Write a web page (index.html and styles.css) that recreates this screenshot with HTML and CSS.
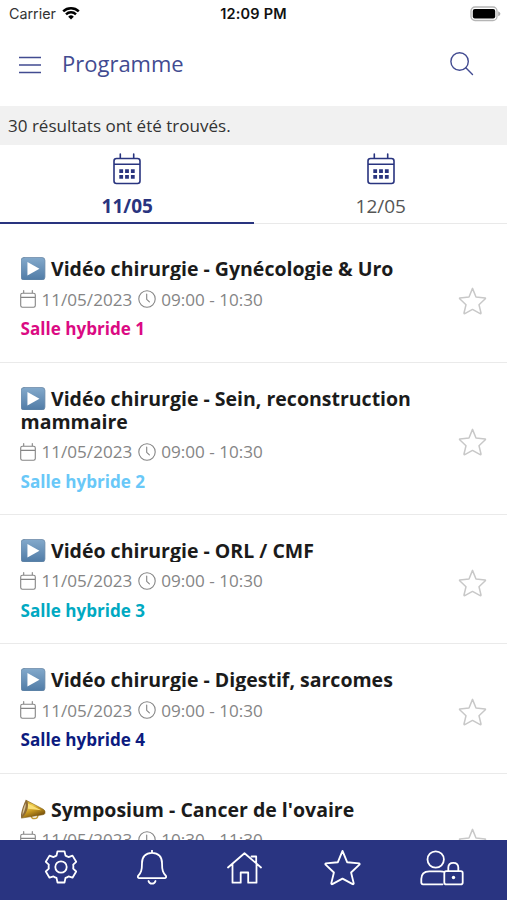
FILE: index.html
```html
<!DOCTYPE html>
<html lang="fr">
<head>
<meta charset="utf-8">
<title>Programme</title>
<link rel="stylesheet" href="styles.css">
</head>
<body>
<svg class="defs" aria-hidden="true">
  <defs>
    <linearGradient id="blue" x1="0" y1="0" x2="0" y2="1"><stop offset="0" stop-color="#83a9cb"/><stop offset="1" stop-color="#507ba6"/></linearGradient>
    <linearGradient id="gold" x1="0" y1="0" x2="0.5" y2="1"><stop offset="0" stop-color="#b98a1c"/><stop offset=".4" stop-color="#f0cd4c"/><stop offset=".65" stop-color="#c7981f"/><stop offset="1" stop-color="#79520c"/></linearGradient>
    <symbol id="play" viewBox="0 0 26 24"><rect x=".8" y=".5" width="24.4" height="23" rx="3" fill="url(#blue)" stroke="#6d8ba8" stroke-width=".8"/><path d="M7.3 5.2v13.6L19.6 12z" fill="#fff"/></symbol>
    <symbol id="star" viewBox="0 0 28 28"><path d="M14 1.4 17.5 10l9.1.9q.7.2.2.9l-6.3 6 2 8.2q0 .8-.8.6L14 22.4l-7.7 4.2q-.8.2-.8-.6l2-8.2-6.3-6q-.5-.7.2-.9l9.1-.9z"/></symbol>
    <symbol id="date" viewBox="0 0 16 18"><path d="M2.4 3.2h11.2q1.7 0 1.7 1.7v10.6q0 1.7-1.7 1.7H2.4q-1.7 0-1.7-1.7V4.900q0-1.700 1.700-1.700zM.7 7.400h14.600M3.700 .6v2.600M12.300 .6v2.600"/></symbol>
    <symbol id="clock" viewBox="0 0 18 18"><circle cx="9" cy="9" r="8.200"/><path d="M8.700 4v5.300l2.700 2.600"/></symbol>
    <symbol id="calendar" viewBox="0 0 28 32"><path d="M3.500 5.500h21q2.500 0 2.500 2.500v20q0 2.500-2.500 2.500h-21Q1 30.500 1 28V8q0-2.500 2.500-2.500zM1 11.200h26M7.300 1v4.500M20.700 1v4.500"/><path class="dots" d="M6.300 16.200h3.800v3.800h-3.800zM12.100 16.200h3.800v3.800h-3.800zM17.900 16.200h3.800v3.800h-3.800zM6.300 22h3.800v3.800h-3.800zM12.100 22h3.800v3.800h-3.800zM17.900 22h3.800v3.800h-3.800z"/></symbol>
  </defs>
</svg>

<div class="screen">
  <div class="status">
    <div class="carrier"><span>Carrier</span>
      <svg class="wifi" viewBox="0 0 18 14"><path d="M1.200 5.300a11.300 11.300 0 0 1 15.600 0M4 8.300a7.300 7.300 0 0 1 10 0"/><path class="wifi-dot" d="M6.200 10.700a4 4 0 0 1 5.600 0L9 13.500z"/></svg>
    </div>
    <div class="time">12:09 PM</div>
    <svg class="battery" viewBox="0 0 31 16"><rect x="1" y="1" width="26" height="13.500" rx="4" fill="#fff" stroke="#b5b5b5" stroke-width="1.300"/><rect x="2.800" y="3" width="22.400" height="9.600" rx="2" fill="#000"/><path d="M28.200 5.300q2.200 1 2.200 2.500t-2.200 2.500z" fill="#aaa"/></svg>
  </div>

  <header class="header">
    <svg class="menu" viewBox="0 0 22 18"><path d="M0 1.500h22M0 9h22M0 16.500h22"/></svg>
    <h1>Programme</h1>
    <svg class="search" viewBox="0 0 24 24"><circle cx="9.600" cy="9.500" r="8.700"/><path d="m15.800 15.800 6.700 6.700"/></svg>
  </header>

  <div class="results">30 résultats ont été trouvés.</div>

  <nav class="tabs">
    <div class="tab active"><svg><use href="#calendar"/></svg><span>11/05</span></div>
    <div class="tab"><svg><use href="#calendar"/></svg><span>12/05</span></div>
  </nav>

  <main class="list">
    <article class="item">
      <div class="info">
        <h2><svg><use href="#play"/></svg>Vidéo chirurgie - Gynécologie &amp; Uro</h2>
        <div class="meta"><svg class="date"><use href="#date"/></svg><span class="day">11/05/2023</span><svg class="clock"><use href="#clock"/></svg><span>09:00 - 10:30</span></div>
        <div class="room pink">Salle hybride 1</div>
      </div>
      <svg class="fav"><use href="#star"/></svg>
    </article>
    <article class="item">
      <div class="info">
        <h2><svg><use href="#play"/></svg>Vidéo chirurgie - Sein, reconstruction mammaire</h2>
        <div class="meta"><svg class="date"><use href="#date"/></svg><span class="day">11/05/2023</span><svg class="clock"><use href="#clock"/></svg><span>09:00 - 10:30</span></div>
        <div class="room sky">Salle hybride 2</div>
      </div>
      <svg class="fav"><use href="#star"/></svg>
    </article>
    <article class="item">
      <div class="info">
        <h2><svg><use href="#play"/></svg>Vidéo chirurgie - ORL / CMF</h2>
        <div class="meta"><svg class="date"><use href="#date"/></svg><span class="day">11/05/2023</span><svg class="clock"><use href="#clock"/></svg><span>09:00 - 10:30</span></div>
        <div class="room teal">Salle hybride 3</div>
      </div>
      <svg class="fav"><use href="#star"/></svg>
    </article>
    <article class="item">
      <div class="info">
        <h2><svg><use href="#play"/></svg>Vidéo chirurgie - Digestif, sarcomes</h2>
        <div class="meta"><svg class="date"><use href="#date"/></svg><span class="day">11/05/2023</span><svg class="clock"><use href="#clock"/></svg><span>09:00 - 10:30</span></div>
        <div class="room navy">Salle hybride 4</div>
      </div>
      <svg class="fav"><use href="#star"/></svg>
    </article>
    <article class="item">
      <div class="info">
        <h2><svg viewBox="0 0 26 24"><path d="M11 17.500q0 3.500 3.500 3.500t3.500-4" fill="none" stroke="#c19a35" stroke-width="1.500"/><path d="M6 2.300 23.500 11.500q2.500 1.500 1.700 4.200-.4 1.200-2.200 1.400L1.500 20.500z" fill="url(#gold)" stroke="#7d5c16" stroke-width=".6"/><path d="M6.500 5 21.500 12.500 8 11z" fill="#f9df76"/><path d="M6 2.300q2.500 1 1.700 7.200T1.500 20.500Q-.3 19.200 1.800 12T6 2.300z" fill="#8d6b37"/><path d="M5.500 5q.7 5-3.300 12.500 0-5.500 3.300-12.500z" fill="#d6c49a"/></svg>Symposium - Cancer de l'ovaire</h2>
        <div class="meta"><svg class="date"><use href="#date"/></svg><span class="day">11/05/2023</span><svg class="clock"><use href="#clock"/></svg><span>10:30 - 11:30</span></div>
        <div class="room pink">Salle hybride 1</div>
      </div>
      <svg class="fav"><use href="#star"/></svg>
    </article>
  </main>

  <footer class="bottom">
    <svg class="gear" viewBox="0 0 34 34"><path d="M13.500 1.300h7l1 4.300q1.500.6 3 1.500l4-1.500 3.700 6.200-3 2.800q.3 2 0 4l3 2.900-3.700 6.200-4-1.300q-1.500 1-3 1.500l-1 4.600h-7l-1-4.600q-1.500-.5-3-1.500l-4 1.300-3.700-6.200 3-2.900q-.3-2 0-4l-3-2.800 3.700-6.200 4 1.500q1.500-.9 3-1.500z"/><circle cx="17" cy="17" r="5.700"/></svg>
    <svg class="bell" viewBox="0 0 30 35"><path d="M15 .5v2.300M15 2.800c-6.500 0-10 4.300-10 10.200 0 7.500-1 9.500-3.700 12.700-1 1.200-.2 2.400 1 2.400h25.400c1.200 0 2-1.200 1-2.400C26 22.500 25 20.500 25 13c0-5.900-3.500-10.200-10-10.200zM11.500 31q.8 2.700 3.500 2.700t3.500-2.700"/></svg>
    <svg class="home" viewBox="0 0 35 32"><path d="M1 15.500 17.500 1.200 34 15.500M5.500 12v18.700h8.200V20.500h7.500v10.200h8.300V12M24.500 4.500h4.700v6.500"/></svg>
    <svg class="star" viewBox="0 0 28 28"><use href="#star"/></svg>
    <svg class="user" viewBox="0 0 44 36"><circle cx="15.700" cy="9.500" r="8.200"/><path d="M22.500 34.300H3q-1.700 0-1.700-1.700v-3.500q0-7.800 8-7.800h11q1.500 0 2.700.4M28.300 21.200v-3.700q0-4.700 5-4.700t5 4.700v3.700M26.200 21.200h14.600q1.900 0 1.900 1.900v9.300q0 1.900-1.900 1.900H26.200q-1.900 0-1.900-1.900v-9.300q0-1.900 1.900-1.900z"/><circle class="keyhole" cx="33.500" cy="27.500" r="1.700"/></svg>
  </footer>
</div>
</body>
</html>
```
FILE: styles.css
```css
* { box-sizing: border-box; }
body { margin: 0; background: #fff; font-family: "Open Sans", sans-serif; }
svg { display: block; flex: none; fill: none; stroke-linecap: round; stroke-linejoin: round; }
.defs { position: absolute; width: 0; height: 0; }
.screen { width: 507px; height: 900px; overflow: hidden; display: flex; flex-direction: column; }

.status { height: 28px; flex: none; display: grid; grid-template-columns: 1fr auto 1fr; align-items: center; padding: 0 6px; font-family: Inter, sans-serif; color: #111; }
.carrier { display: flex; align-items: center; gap: 6px; padding-left: 3px; margin-top: -1px; font-size: 14.3px; color: #333; }
.wifi { width: 18px; height: 14px; stroke: #000; stroke-width: 2.5; stroke-linecap: butt; margin-top: -1px; }
.wifi-dot { fill: #000; stroke: none; }
.time { font-size: 14.5px; font-weight: 600; letter-spacing: .2px; margin-top: -1px; }
.battery { width: 31px; height: 16px; justify-self: end; margin-top: -1px; }

.header { height: 78px; flex: none; display: flex; align-items: center; padding: 0 33px 6px 19px; color: #424b91; }
.menu { width: 22px; height: 18px; stroke: #424b91; stroke-width: 1.5; stroke-linecap: butt; margin-top: 1px; }
.header h1 { margin: -2px auto 0 21px; font-size: 22px; line-height: 30px; font-weight: 400; }
.search { width: 24px; height: 24px; stroke: #424b91; stroke-width: 1.4; margin-top: -1px; }

.results { height: 39px; flex: none; background: #f1f1f1; padding-left: 8px; line-height: 39px; font-size: 17.05px; color: #333; }

.tabs { height: 79px; flex: none; display: flex; border-bottom: 1px solid #e9e9e9; }
.tab { flex: 1; display: flex; flex-direction: column; align-items: center; padding: 8px 0 0 1px; font-size: 19px; line-height: 28px; color: #555; }
.tab svg { width: 28px; height: 32px; stroke: #29347f; stroke-width: 1.6; margin-bottom: 7px; }
.tab .dots, .dots { fill: #29347f; stroke: none; }
.active { color: #29347f; font-weight: 700; height: 78.5px; border-bottom: 2.5px solid #29347f; }

.list { flex: 1; min-height: 0; overflow: hidden; padding-top: 9.2px; }
.item { display: flex; align-items: center; justify-content: space-between; border-bottom: 1px solid #eaeaea; padding: 24px 20px 17.400px 20.500px; }
.info { width: 410px; }
h2 { margin: 0; overflow: hidden; font-size: 19.5px; line-height: 23px; font-weight: 700; color: #1b1b1b; }
h2 svg { display: inline-block; width: 26px; height: 23.5px; margin: -3px 5px -3px -.5px; vertical-align: -1.500px; }
.meta { display: flex; align-items: center; height: 34px; padding-top: 4px; font-size: 17.100px; color: #858585; }
.date { width: 16px; height: 18px; stroke: #858585; stroke-width: 1.1; margin: 0 5.500px 0 -.5px; }
.clock { width: 18px; height: 18px; stroke: #858585; stroke-width: 1.1; margin: 0 5.500px; }
.room { height: 30px; line-height: 30px; font-size: 17.100px; font-weight: 700; }
.pink { color: #db0a83; }
.sky { color: #69c8f8; }
.teal { color: #00a9c2; }
.navy { color: #0c1b7f; }
.fav { width: 29px; height: 28px; stroke: #c8c8c8; stroke-width: 1.5; margin-top: 1px; }

.bottom { height: 60px; flex: none; display: flex; background: #293481; padding: 10px 43px 0 44px; }
.bottom svg { stroke: #fff; stroke-width: 1.8; }
.gear { width: 34px; height: 34px; }
.bell { width: 30px; height: 35px; margin-left: 59px; }
.home { width: 35px; height: 32px; margin: 2px 0 0 60px; }
.bottom .star { width: 37px; height: 37px; margin: -1px 0 0 62px; stroke-width: 1.4; }
.user { width: 44px; height: 36px; margin-left: 59px; }
.keyhole { fill: #fff; stroke: none; }
```
